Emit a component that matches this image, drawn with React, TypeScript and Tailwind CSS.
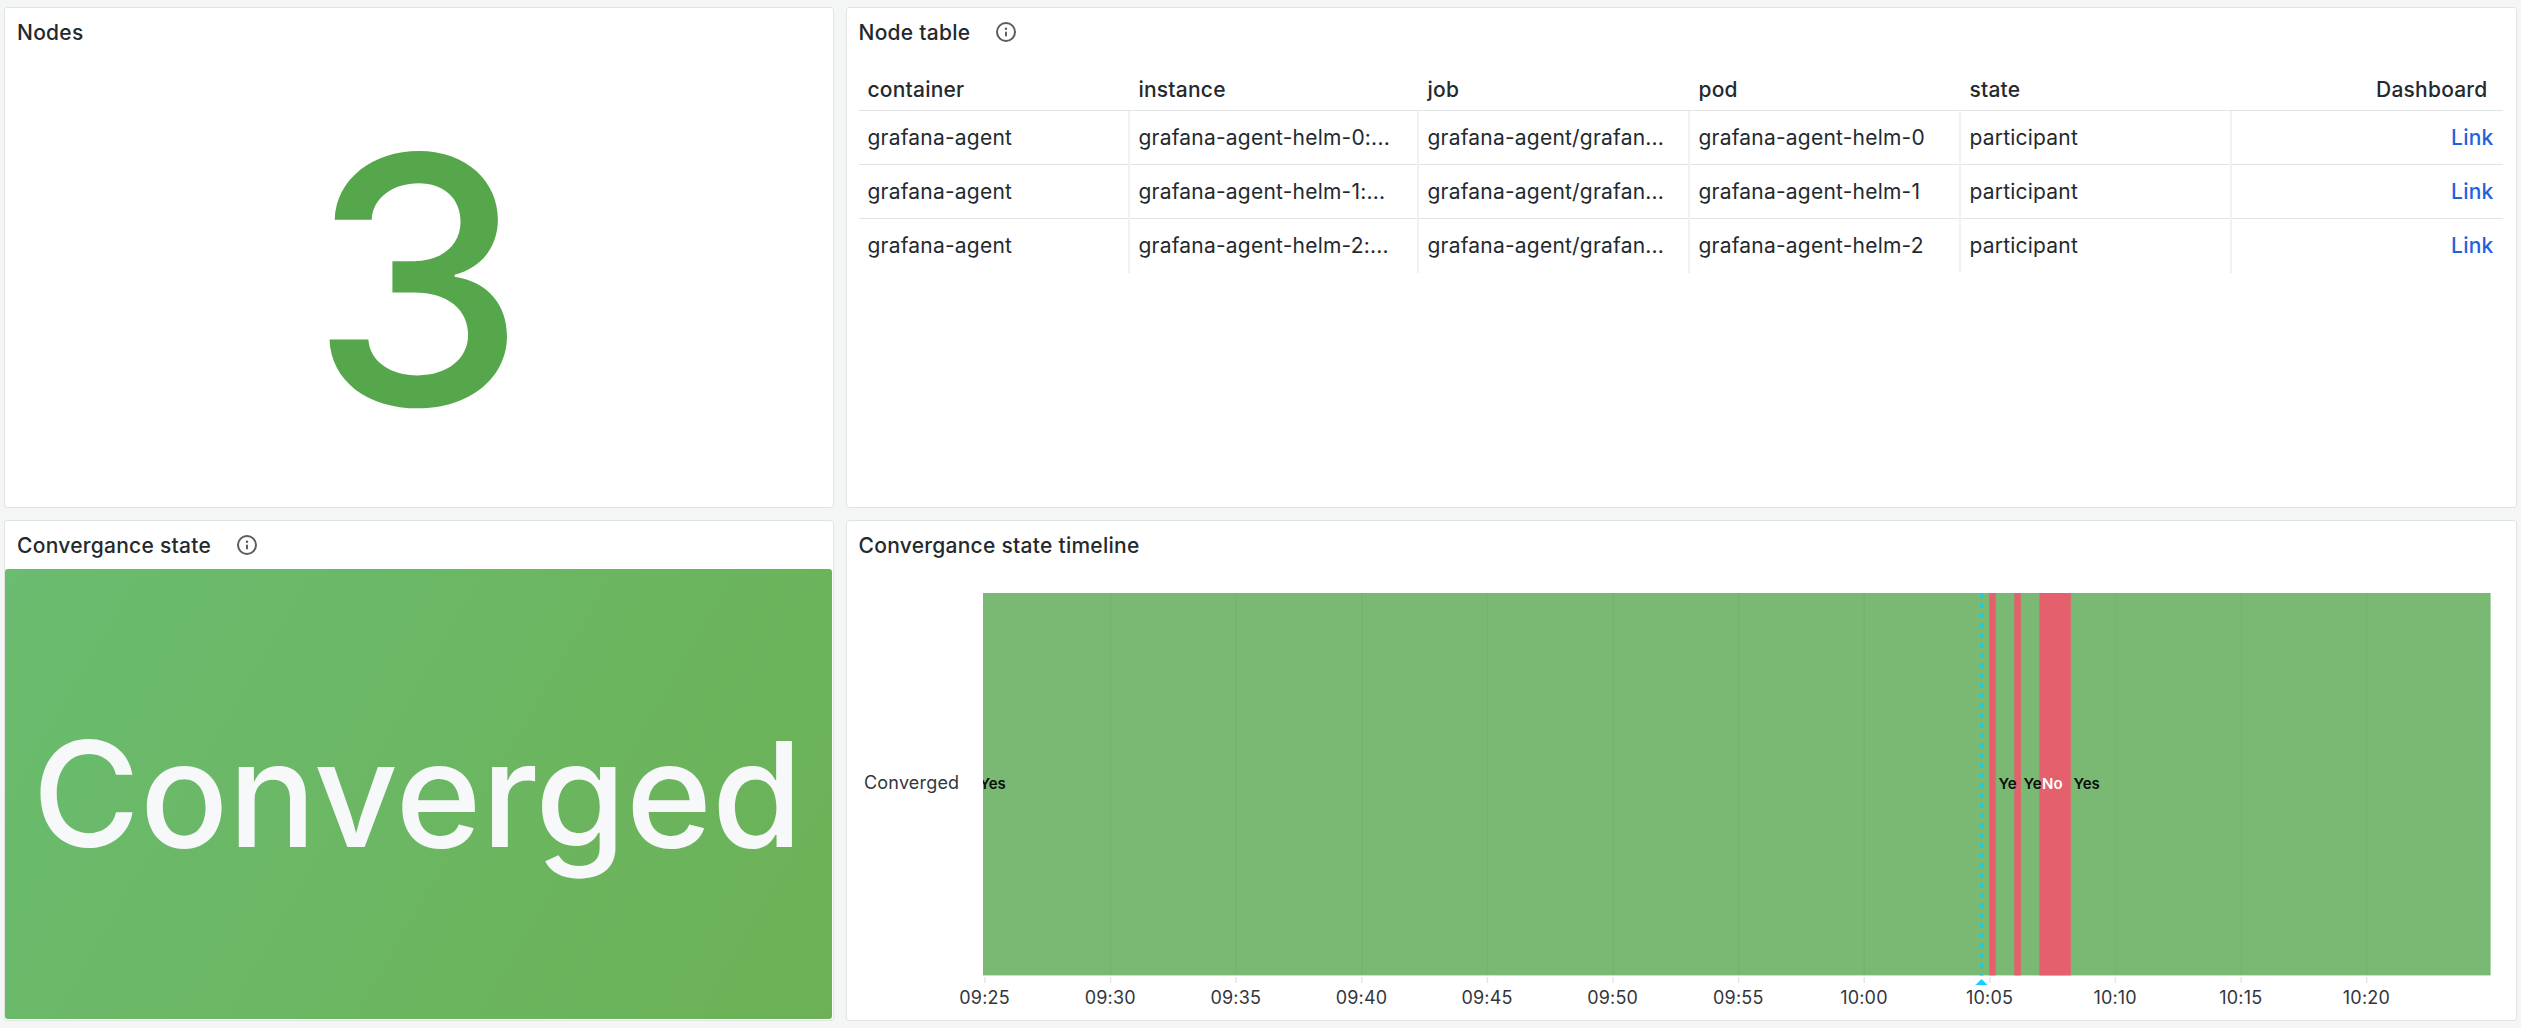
import React from "react";

const COLS = "grid grid-cols-[271px_289px_271px_271px_271px_271px]";

const rows = [0, 1, 2].map((n) => [
  "grafana-agent",
  `grafana-agent-helm-${n}:...`,
  "grafana-agent/grafan...",
  `grafana-agent-helm-${n}`,
  "participant",
]);

const ticks = ["09:25", "09:30", "09:35", "09:40", "09:45", "09:50", "09:55", "10:00", "10:05", "10:10", "10:15", "10:20"];

function InfoIcon() {
  return (
    <svg className="ml-[24px] h-6 w-6" viewBox="0 0 24 24" fill="#5b5d62">
      <path d="M12,2A10,10,0,1,0,22,12,10.01114,10.01114,0,0,0,12,2Zm0,18a8,8,0,1,1,8-8A8.00917,8.00917,0,0,1,12,20Zm0-8.5a1,1,0,0,0-1,1v3a1,1,0,0,0,2,0v-3A1,1,0,0,0,12,11.5Zm0-4a1.25,1.25,0,1,0,1.25,1.25A1.25,1.25,0,0,0,12,7.5Z" />
    </svg>
  );
}

function Panel({ title, info, wide, children }: { title: string; info?: boolean; wide?: boolean; children: React.ReactNode }) {
  return (
    <section className="flex min-w-0 flex-col overflow-hidden rounded-[3px] border border-[#e2e4e4] bg-white">
      <header className={`flex h-12 shrink-0 items-center ${wide ? "pl-[11.5px]" : "pl-[12px]"}`}>
        <h2 className="pt-[2px] text-[21px] leading-[32px] font-medium tracking-[0.27px]">{title}</h2>
        {info && <InfoIcon />}
      </header>
      {children}
    </section>
  );
}

function NodeTable() {
  return (
    <div className="ml-[11.5px] mt-[17px] w-[1644px] text-[21px] tracking-[0.01em]">
      <div className={`${COLS} h-[38px] border-b border-[#e2e3e4] leading-[34px] font-medium`}>
        {["container", "instance", "job", "pod", "state"].map((h) => (
          <div key={h} className="pl-[9px]">{h}</div>
        ))}
        <div className="pr-[15px] text-right">Dashboard</div>
      </div>
      {rows.map((r, i) => (
        <div key={i} className={`${COLS} h-[54px] leading-[54px] ${i < 2 ? "border-b border-[#e2e3e4]" : ""}`}>
          {r.map((c, j) => (
            <div key={j} className="border-r-2 border-[#f1f1f2] pl-[9px] whitespace-nowrap">{c}</div>
          ))}
          <div className="pr-[9px] text-right font-medium text-[#1f62e0]">Link</div>
        </div>
      ))}
    </div>
  );
}

function Timeline() {
  return (
    <svg className="block h-[450px] w-[1670px]" viewBox="847 569 1670 450" fontFamily="Inter, sans-serif">
      <rect x="983" y="593" width="1507.6" height="382.4" fill="#7ab974" />
      {ticks.map((t, i) => {
        const x = 984.9 + i * 125.62;
        return (
          <g key={t}>
            {i > 0 && <rect x={x - 0.75} y="593" width="1.5" height="382" fill="#75b470" />}
            <rect x={x - 0.75} y="977" width="1.5" height="6" fill="#e6e7e8" />
            <text x={x - 0.3} y="1004" textAnchor="middle" fontSize="18" letterSpacing="0.19" fill="#33363c">{t}</text>
          </g>
        );
      })}
      <rect x="1989.2" y="593" width="6.5" height="382.4" fill="#e5606d" />
      <rect x="2014.3" y="593" width="6.5" height="382.4" fill="#e5606d" />
      <rect x="2039.4" y="593" width="31.4" height="382.4" fill="#e5606d" />
      <line x1="1981.6" x2="1981.6" y1="593" y2="975.4" stroke="#22cbdc" strokeWidth="3.2" strokeDasharray="5 5" />
      <path d="M1981.5 979 L1987.5 985 H1975.5 Z" fill="#1fcdfb" />
      <text x="864" y="788.5" fontSize="18" letterSpacing="0.19" fill="#33363c">Converged</text>
      <svg x="983" y="593" width="1508" height="383" viewBox="983 593 1508 383">
        <g fontSize="15" fontWeight="600" fill="#0b0f0b">
          <text x="979.5" y="789">Yes</text>
          <text x="1998.5" y="789">Ye</text>
          <text x="2023.5" y="789">Ye</text>
          <text x="2042" y="789" fill="#fff">No</text>
          <text x="2073.5" y="789">Yes</text>
        </g>
      </svg>
    </svg>
  );
}

export default function App() {
  return (
    <main className="grid h-[1028px] w-[2521px] grid-cols-[830px_1671px] grid-rows-[501px_501px] gap-x-[12px] gap-y-[12px] overflow-hidden bg-[#f4f5f5] pt-[7px] pl-1 font-['Inter',sans-serif] text-[#24292e]">
      <Panel title="Nodes">
        <div className="flex h-[449px] items-center justify-center pr-[2px] text-[344.5px] leading-none font-medium text-[#56a64b]">3</div>
      </Panel>
      <Panel title="Node table" info wide>
        <NodeTable />
      </Panel>
      <Panel title="Convergance state" info>
        <div className="mr-px flex h-[450px] items-center justify-center rounded-[3px] bg-[linear-gradient(120deg,#6abc70,#6cb155)] pr-[2px] text-[146.4px] leading-none font-medium text-[#f7f8fa]">
          Converged
        </div>
      </Panel>
      <Panel title="Convergance state timeline" wide>
        <Timeline />
      </Panel>
    </main>
  );
}
